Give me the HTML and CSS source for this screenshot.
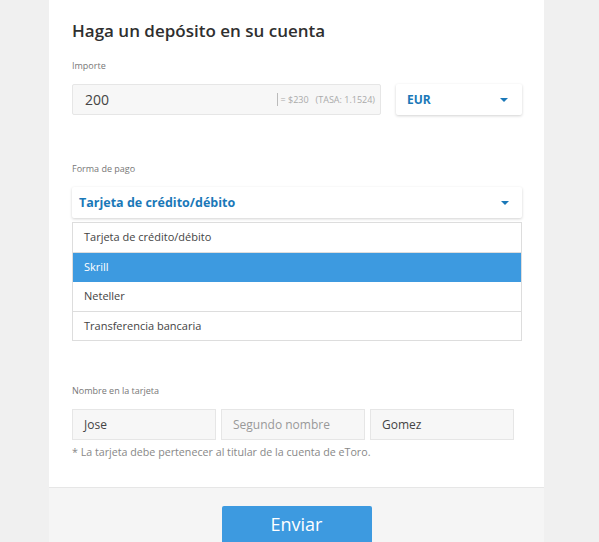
FILE: index.html
```html
<!DOCTYPE html>
<html>
<head>
	<meta charset="utf-8">
	<title>Depósito</title>
	<link rel="stylesheet" href="styles.css">
</head>
<body>
	<main class="card">
		<div class="card-body">
			<h2>Haga un depósito en su cuenta</h2>
			<div class="label">Importe</div>
			<div class="amount-row">
				<div class="amount">
					<span class="amount-value">200</span>
					<span class="rate"><span class="bar"></span>= $230&nbsp;&nbsp;&nbsp;(TASA: 1.1524)</span>
				</div>
				<div class="select currency">EUR<span class="caret"></span></div>
			</div>
			<div class="label label-pay">Forma de pago</div>
			<div class="select method">Tarjeta de crédito/débito<span class="caret"></span></div>
			<ul class="options">
				<li>Tarjeta de crédito/débito</li>
				<li class="active">Skrill</li>
				<li>Neteller</li>
				<li>Transferencia bancaria</li>
			</ul>
			<div class="label label-name">Nombre en la tarjeta</div>
			<div class="names">
				<div class="field">Jose</div>
				<div class="field placeholder">Segundo nombre</div>
				<div class="field">Gomez</div>
			</div>
			<p class="note">* La tarjeta debe pertenecer al titular de la cuenta de eToro.</p>
		</div>
		<div class="card-foot">
			<button class="send">Enviar</button>
		</div>
	</main>
</body>
</html>
```
FILE: styles.css
```css
body{margin: 0;background-color: #f0f0f0;font-family: 'Open Sans', sans-serif;color: #333;height: 542px;overflow: hidden;}
.card{margin-left: 49px;width: 495px;background-color: #fff;}
.card-body{padding: 19px 22px 27px 23px;}
h2{margin: 0;font-size: 17px;line-height: 24px;font-weight: 600;color: #2f2f2f;}
.label{font-size: 9px;line-height: 12px;color: #777;margin-top: 17px;}
.label-pay{margin-top: 48px;}
.label-name{margin-top: 44px;}
.amount-row{display: flex;gap: 15px;margin-top: 12px;}
.amount{width: 309px;height: 31px;box-sizing: border-box;background-color: #f7f7f7;border: 1px solid #e6e6e6;border-radius: 2px;display: flex;align-items: center;justify-content: space-between;padding: 0 5px 0 12px;}
.amount-value{font-size: 14px;color: #444;}
.rate{font-size: 9px;color: #aaa;display: flex;align-items: center;}
.bar{display: inline-block;width: 1px;height: 13px;background-color: #bbb;margin-right: 3px;}
.select{box-sizing: border-box;height: 31px;background-color: #fff;border-radius: 2px;box-shadow: 0 1px 3px rgba(0,0,0,0.18);display: flex;align-items: center;justify-content: space-between;font-weight: 700;color: #1a78b8;}
.currency{width: 126px;padding: 0 14px 0 11px;font-size: 12px;}
.method{margin-top: 12px;padding: 0 13px 0 7px;font-size: 12.5px;}
.caret{width: 0;height: 0;border-left: 4px solid transparent;border-right: 4px solid transparent;border-top: 4px solid #1a78b8;}
.options{list-style: none;margin: 4px 0 0;padding: 0;border: 1px solid #ddd;border-bottom: 0;}
.options li{height: 28.5px;line-height: 28.5px;border-bottom: 1px solid #ddd;padding-left: 11px;font-size: 11px;color: #444;}
.options li.active{background-color: #3d9ae0;color: #fff;border-bottom-color: #3d9ae0;}
.names{display: flex;gap: 5px;width: 442px;margin-top: 12px;}
.field{flex: 1;height: 31px;line-height: 29px;box-sizing: border-box;background-color: #f7f7f7;border: 1px solid #e6e6e6;padding-left: 11px;font-size: 12px;color: #444;}
.field.placeholder{color: #999;}
.note{margin: 5px 0 0;font-size: 10.7px;line-height: 15px;color: #888;}
.card-foot{border-top: 1px solid #e6e6e6;background-color: #f5f5f5;padding-top: 18px;text-align: center;height: 80px;}
.send{width: 150px;height: 44px;border: 0;border-radius: 2px;background-color: #3d9ae0;color: #fff;font-family: 'Open Sans', sans-serif;font-size: 18px;padding: 0 0 8px;}
```
